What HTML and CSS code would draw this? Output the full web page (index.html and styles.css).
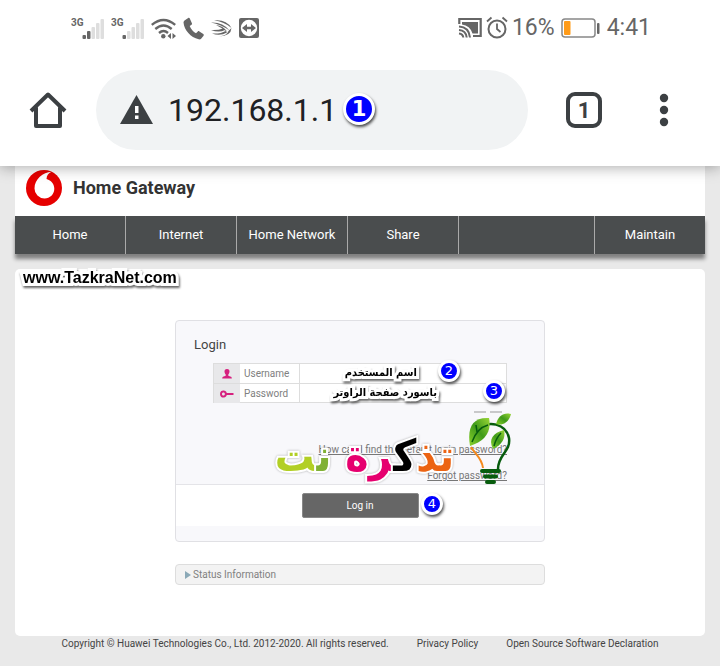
FILE: index.html
```html
<!DOCTYPE html>
<html lang="en">
<head>
<meta charset="utf-8">
<meta name="viewport" content="width=device-width, initial-scale=1">
<title>Home Gateway</title>
<link rel="stylesheet" href="styles.css">
</head>
<body>
<header class="browser">
  <div class="status">
    <div class="status-group">
      <svg width="33" height="24" viewBox="0 0 33 24" aria-hidden="true">
        <text class="net" x="0" y="10">3G</text>
        <g fill="#dedede"><rect x="20.500" y="11" width="3.500" height="12" rx="1"/><rect x="25" y="7" width="3.500" height="16" rx="1"/><rect x="29.500" y="3" width="3.500" height="20" rx="1"/></g>
        <rect x="11.500" y="19" width="3.500" height="4" rx="1"/><rect x="16" y="15" width="3.500" height="8" rx="1"/>
      </svg>
      <svg width="33" height="24" viewBox="0 0 33 24" aria-hidden="true">
        <text class="net" x="0" y="10">3G</text>
        <g fill="#dedede"><rect x="16" y="15" width="3.500" height="8" rx="1"/><rect x="20.500" y="11" width="3.500" height="12" rx="1"/><rect x="25" y="7" width="3.500" height="16" rx="1"/><rect x="29.500" y="3" width="3.500" height="20" rx="1"/></g>
        <rect x="11.500" y="19" width="3.500" height="4" rx="1"/>
      </svg>
      <svg width="25" height="24" viewBox="0 0 25 24" aria-hidden="true">
        <g fill="none" stroke="#666" stroke-width="2.400"><path d="M.8 8.800Q12.500-1 24.200 8.800M4.300 13Q12.500 6 20.700 13M8 17Q12.500 13.200 17 17"/></g>
        <circle cx="12.300" cy="20.300" r="2.200"/>
        <path d="M16.500 20l3.500-3v6zM21.500 17l3.500 3-3.500 3z"/>
      </svg>
      <svg width="21" height="24" viewBox="0 0 21 24" aria-hidden="true">
        <path d="M1.500 4.500 5.200 2c.7-.4 1.300-.1 1.600.5l2.100 4.700c.3.700.1 1.100-.4 1.500L6.700 10c1.300 3.200 3.500 5.700 6.300 7.200l1.800-1.700c.5-.5 1-.5 1.600-.1l3.900 2.700c.6.500.7 1.100.3 1.700l-2.500 3c-.6.600-1.500.7-2.400.5C7.600 21.200 1.300 14.500.5 6.500c0-.8.3-1.500 1-2z"/>
      </svg>
      <svg width="21" height="24" viewBox="0 0 21 24" aria-hidden="true">
        <path d="M3 4.500Q15 3 20.500 12Q13 5.500 3 4.500zM0 6.500Q12 6 18.500 14.500Q10 8.500 0 6.500zM5 9Q12 9.500 16.500 16Q11 12 5 9zM0 14Q7 14.500 12 12.500L14 14Q8 17 0 14zM1 17.500Q10 18 14.500 15L16 16.500Q9 20.500 1 17.500zM8 20.500Q16 19.500 17.500 15L20.500 12Q20 20 8 20.500z"/>
      </svg>
      <svg width="20" height="24" viewBox="0 0 20 24" aria-hidden="true">
        <rect y="2" width="20" height="20" rx="2"/><circle cx="10" cy="12" r="8.200" fill="#fff"/>
        <path d="M3 12l5-4v2.800h4V8l5 4-5 4v-2.800H8V16z"/>
      </svg>
    </div>
    <div class="status-group status-right">
      <svg width="24" height="22" viewBox="0 0 24 22" aria-hidden="true">
        <g fill="none" stroke="#666" stroke-width="2.200"><path d="M1.300 7V2h21.400v17H15"/><path stroke-width="2" d="M1 9.500Q11 10 12 20.500M1 13Q8 13.500 8.700 20.500M1 16.500Q5 17 5.300 20.500"/></g>
        <path d="M4 5h16v11.500h-5.500Q12 8.500 4 7.500z"/>
      </svg>
      <svg width="22" height="24" viewBox="0 0 22 24" aria-hidden="true">
        <g fill="none" stroke="#666" stroke-width="2"><circle cx="11" cy="13" r="8.500"/><path stroke-width="1.800" d="M11 7.500V13l3.500 3M1 5.500 5.500 1.500M21 5.500 16.500 1.500"/></g>
      </svg>
      <span>16%</span>
      <svg class="battery" width="39" height="20" viewBox="0 0 39 20" aria-hidden="true">
        <rect x="1" y="1" width="33" height="18" rx="3" fill="#fff" stroke="#888" stroke-width="1.500"/><rect x="3" y="3" width="6.500" height="14" rx="1" fill="#ff9b19"/><rect x="36" y="5" width="2.500" height="11" rx="1"/>
      </svg>
      <span class="clock">4:41</span>
    </div>
  </div>
  <div class="toolbar">
    <button class="tool" type="button" aria-label="Home">
      <svg width="40" height="40" viewBox="0 0 40 40"><path fill="none" stroke="#3c4043" stroke-width="4" stroke-linejoin="round" stroke-linecap="butt" d="M3 21 20 4.500 37 21M8 17.500V36H32V17.500"/></svg>
    </button>
    <div class="address">
      <svg width="33" height="30" viewBox="0 0 33 30" aria-hidden="true"><path fill="#3c4043" d="M16.500 0 33 29H0z"/><path fill="#fff" d="M15 11h3.500v7H15zM15 20.500h3.500V24H15z"/></svg>
      <input class="url" type="text" value="192.168.1.1" aria-label="Address">
      <span class="badge badge-large">1</span>
    </div>
    <button class="tool" type="button" aria-label="Tabs"><span class="tabs">1</span></button>
    <button class="tool" type="button" aria-label="Menu">
      <svg width="10" height="34" viewBox="0 0 10 34"><g fill="#3c4043"><circle cx="5" cy="5" r="4.200"/><circle cx="5" cy="17" r="4.200"/><circle cx="5" cy="29" r="4.200"/></g></svg>
    </button>
  </div>
</header>
<div class="page">
  <div class="brand">
    <svg width="36" height="36" viewBox="0 0 36 36" aria-hidden="true">
      <circle cx="18" cy="18" r="18" fill="#e60000"/>
      <path fill="#fff" d="M25.500 1.800C17 2.500 8.500 9 8.500 18.500A10 10 0 0 0 18.500 28.500C24 28.500 28.300 24.200 28.300 18.800C28.300 14 25.500 10.500 20.500 9C20.700 5.500 22.500 3 25.500 1.800z"/>
    </svg>
    <h1>Home Gateway</h1>
  </div>
  <nav class="menu">
    <a href="#">Home</a><a href="#">Internet</a><a href="#">Home Network</a><a href="#">Share</a><span></span><a href="#">Maintain</a>
  </nav>
  <main class="panel">
    <span class="note site">www.TazkraNet.com</span>
    <form class="login">
      <h2>Login</h2>
      <div class="fields">
        <div class="field">
          <span class="mark"><svg width="10" height="10" viewBox="0 0 10 10" aria-hidden="true"><path fill="#d6217f" d="M5 0c1.800 0 2.700 1.200 2.500 2.800C7.300 4.300 6.700 5 6.300 5.500v1.200L9 7.800c.6.300.8 1 .8 1.700H.2c0-.7.2-1.400.8-1.700l2.700-1.100V5.500C3.300 5 2.700 4.300 2.500 2.800 2.300 1.200 3.200 0 5 0z"/></svg></span>
          <label for="user">Username</label>
          <input id="user" type="text">
        </div>
        <div class="field">
          <span class="mark"><svg class="key" width="14" height="8" viewBox="0 0 14 8" aria-hidden="true"><path fill="none" stroke="#d6217f" stroke-width="2" d="M6 4H13.500M4 1.500C0 .5 0 7.500 4 6.500C6.500 6 6.500 2 4 1.500z"/></svg></span>
          <label for="pass">Password</label>
          <input id="pass" type="password">
        </div>
        <span class="note note-user" lang="ar" dir="rtl">اسم المستخدم</span>
        <span class="note note-pass" lang="ar" dir="rtl">باسورد صفحة الراوتر</span>
        <span class="badge badge-user">2</span>
        <span class="badge badge-pass">3</span>
      </div>
      <div class="help">
        <a href="#">How can I find the default login password?</a>
        <a href="#">Forgot password?</a>
      </div>
      <div class="actions">
        <button class="submit" type="submit">Log in</button>
        <span class="badge badge-submit">4</span>
      </div>
      <div class="watermark" lang="ar" dir="rtl"><span class="orange">تذ</span><span class="black">ك</span><span class="pink">رة</span> <span class="green">ن</span><span class="lime">ت</span></div>
      <svg class="bulb" width="46" height="74" viewBox="0 0 46 74" aria-hidden="true">
        <defs><linearGradient id="leaf" x1="0" y1="1" x2="1" y2="0"><stop offset="0" stop-color="#8bd32c"/><stop offset=".5" stop-color="#3f9a1a"/><stop offset="1" stop-color="#9bd736"/></linearGradient></defs>
        <path stroke="#999" d="M6 1H18M22 1H34"/>
        <path fill="none" stroke="#075c0d" stroke-width="2.500" d="M10 19C20 8 38 13 41 27C43 41 30 43 30 58"/>
        <path fill="none" stroke="#f58a1d" stroke-width="2" d="M3 36C7 43 14 47 15 57"/>
        <g fill="url(#leaf)"><path d="M2 35C-1 17 4 6 21 7C24 22 16 30 2 35z"/><path d="M28 13C30 5 36 1 43 3C41 11 35 15 28 13z"/><path d="M25 38C20 28 25 22 36 19C38 27 34 34 25 38z"/></g>
        <path fill="none" stroke="#075c0d" stroke-width="1.500" d="M4 31Q9 17 20 14M9 21 8 14M26 35Q28 27 33 22"/>
        <path fill="none" stroke="#075c0d" stroke-width="4" stroke-linecap="round" d="M14 60H31M17 65.500H28M19 71H26"/>
      </svg>
    </form>
    <details class="info"><summary>Status Information</summary></details>
  </main>
  <footer class="footer">
    <span>Copyright © Huawei Technologies Co., Ltd. 2012-2020. All rights reserved.</span>
    <a href="#">Privacy Policy</a>
    <a href="#">Open Source Software Declaration</a>
  </footer>
</div>
</body>
</html>
```
FILE: styles.css
```css
* { box-sizing: border-box; }
body {
  margin: 0;
  background: #e9e9e9;
  color: #444;
  font: 10px/16px Roboto, sans-serif;
}
a { color: inherit; text-decoration: none; }
h1, h2 { margin: 0; }
button, input { font: inherit; }
svg { display: block; flex: none; }

.browser {
  position: relative;
  z-index: 1;
  background: #fff;
  box-shadow: 0 1px 14px rgba(0, 0, 0, .35);
}
.status {
  display: flex;
  justify-content: space-between;
  height: 56px;
  padding: 0 69px 0 71px;
  color: #666;
  font-size: 23px;
}
.status-group { display: flex; align-items: center; gap: 7px; }
.status-right { gap: 4px; }
.status svg { fill: #666; }
.net { font-size: 10px; font-weight: 700; }
.battery { margin-left: 2px; }
.clock { margin-left: 3px; }

.toolbar { display: flex; align-items: center; gap: 40px; padding: 14px 36px 16px 28px; }
.tool {
  display: flex;
  flex: none;
  align-items: center;
  justify-content: center;
  width: 40px;
  height: 40px;
  padding: 0;
  border: 0;
  background: none;
  color: #3c4043;
}
.address {
  position: relative;
  display: flex;
  flex: 1;
  align-items: center;
  gap: 15px;
  min-width: 0;
  height: 80px;
  margin: 0 -4px 0 -12px;
  padding: 0 24px;
  border-radius: 40px;
  background: #f1f3f4;
}
.url {
  flex: 1;
  min-width: 0;
  padding: 0;
  border: 0;
  background: none;
  color: #202124;
  font-size: 32px;
}
.tabs {
  width: 36px;
  height: 36px;
  border: 4px solid #3c4043;
  border-radius: 9px;
  font-size: 22px;
  font-weight: 700;
  line-height: 29px;
}

.badge {
  position: absolute;
  width: 22px;
  height: 22px;
  border: 3px solid #fff;
  border-radius: 50%;
  background: #00f;
  box-shadow: 1px 2px 3px rgba(0, 0, 0, .7);
  color: #fff;
  font: 13px/16px "DejaVu Sans", sans-serif;
  text-align: center;
}
.badge-large {
  top: 23px;
  left: 247px;
  width: 32px;
  height: 32px;
  font-size: 21px;
  font-weight: 700;
  line-height: 26px;
}
.badge-user { top: -4px; left: 224px; }
.badge-pass { top: 16px; left: 269px; }
.badge-submit { top: 8px; left: 245px; }

.page { padding: 0 15px; }
.brand { display: flex; align-items: center; gap: 11px; height: 50px; padding: 0 11px 6px; background: #fff; }
.brand h1 { color: #333; font-size: 18px; line-height: 24px; }
.menu {
  display: grid;
  grid-template-columns: repeat(4, 111fr) 136fr 110fr;
  background: #4a4d4e;
  box-shadow: 0 5px 4px rgba(0, 0, 0, .45);
  color: #fff;
  font-size: 13px;
  line-height: 38px;
  text-align: center;
}
.menu > :not(:last-child) { border-right: 1px solid #aaa; }

.panel {
  position: relative;
  margin-top: 15px;
  padding: 51px 15px;
  border-radius: 5px;
  background: #fff;
}
.login {
  position: relative;
  max-width: 370px;
  margin: 0 auto 22px;
  padding-bottom: 15px;
  border: 1px solid #e0e0e4;
  border-radius: 4px;
  background: #f8f8fb;
}
.login h2 { padding: 16px 18px 10px; font-size: 13px; font-weight: 400; }
.fields { position: relative; margin: 0 37px; border: 1px solid #ddd; background: #fff; }
.field { display: grid; grid-template-columns: 26px 60px 1fr; height: 19px; color: #808080; line-height: 19px; }
.field + .field { border-top: 1px solid #ddd; }
.mark { display: grid; place-items: center; background: #e8e8ea; }
.field label { padding-left: 4px; border-right: 1px solid #ddd; }
.field input { min-width: 0; padding: 0 4px; border: 0; background: none; }
.help { display: flex; flex-direction: column; align-items: flex-end; gap: 10px; padding: 39px 37px 0; color: #777; }
.help a { text-decoration: underline; }
.actions { position: relative; padding: 8px 0; border-top: 1px solid #e4e4e8; background: #fff; text-align: center; }
.submit {
  width: 117px;
  height: 25px;
  padding: 0;
  border: 1px solid #888;
  border-radius: 2px;
  background: #666;
  color: #fff;
  vertical-align: top;
}

.note {
  position: absolute;
  color: #000;
  font-weight: 700;
  white-space: nowrap;
  -webkit-text-stroke: 6px #fff;
  paint-order: stroke fill;
  filter: drop-shadow(1px 2px 1px rgba(0, 0, 0, .6));
}
.site { top: 0; left: 8px; font: 700 16px/18px "Liberation Sans", sans-serif; }
.note-user { right: 89px; top: 0; font: 700 11px/18px "DejaVu Sans Condensed", "DejaVu Sans", sans-serif; }
.note-pass { right: 69px; top: 20px; font: 700 11px/18px "DejaVu Sans Condensed", "DejaVu Sans", sans-serif; }
.watermark {
  position: absolute;
  top: 107px;
  right: 90px;
  font: 700 44px/56px "DejaVu Sans Condensed", "DejaVu Sans", sans-serif;
  white-space: nowrap;
  -webkit-text-stroke: 4px #fff;
  paint-order: stroke fill;
  filter: drop-shadow(0 0 1px rgba(0, 0, 0, .3));
}
.orange { color: #ec6413; }
.black { color: #000; }
.pink { color: #e6006f; }
.green { color: #80b135; }
.lime { color: #b2cf25; }
.bulb { position: absolute; top: 90px; right: 30px; }

.info { max-width: 370px; margin: 0 auto; border: 1px solid #ddd; border-radius: 4px; background: #f3f3f3; color: #808080; }
.info summary { display: flex; align-items: center; gap: 2px; height: 19px; padding-left: 9px; list-style: none; }
.info summary::before { content: ""; border: solid transparent; border-width: 4px 0 4px 6px; border-left-color: #8ba9b7; }
.footer { display: flex; flex-wrap: wrap; justify-content: center; column-gap: 28px; }
```
